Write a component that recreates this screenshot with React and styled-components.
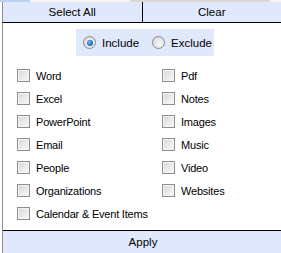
import styled, { createGlobalStyle } from "styled-components"

const Global = createGlobalStyle`
    html, body { margin: 0; padding: 0; background: #fff; }
    body { font-family: "Liberation Sans", Arial, sans-serif; font-size: 11px; color: #000; }
`;

const Panel = styled.div`
    width: 281px;
    height: 253px;
    display: flex;
    flex-direction: column;
    background: #fff;
    overflow: hidden;
`;

const TopStrip = styled.div`
    height: 2px;
    display: flex;
`;

const StripPiece = styled.div`
    width: ${p => p.w}px;
    background: ${p => p.c};
`;

const ButtonBar = styled.div`
    display: flex;
    height: 20px;
    border-bottom: 1px solid #000;
    background: #e0e9fb;
    margin-left: 2px;
    border-left: 1px solid #8f8f8f;
`;

const BarButton = styled.div`
    flex: 1;
    display: flex;
    align-items: center;
    justify-content: center;
    font-size: 11.5px;
    & + & { border-left: 1px solid #000; }
`;

const Body = styled.div`
    flex: 1;
    margin-left: 2px;
    border-left: 1px solid #8f8f8f;
    display: flex;
    flex-direction: column;
`;

const RadioBox = styled.div`
    align-self: flex-start;
    margin: 6px 0 0 73px;
    width: 138px;
    height: 27px;
    background: #e0e9fb;
    display: flex;
    align-items: center;
    padding-left: 7px;
    box-sizing: border-box;
`;

const RadioItem = styled.label`
    display: flex;
    align-items: center;
    margin-right: ${p => p.mr || 0}px;
    font-size: 11.5px;
`;

const RadioDot = styled.span`
    width: 13px;
    height: 13px;
    border-radius: 50%;
    box-sizing: border-box;
    border: 1px solid #8a8a8a;
    background: radial-gradient(circle at 60% 60%, #f8f8f8 0%, #e4e4e4 55%, #c8c8c8 100%);
    display: flex;
    align-items: center;
    justify-content: center;
    margin-right: 6px;
    &::after {
        content: "";
        display: ${p => (p.on ? "block" : "none")};
        width: 6px;
        height: 6px;
        border-radius: 50%;
        background: radial-gradient(circle at 40% 40%, #6cc2f2 0%, #1d6aad 65%, #0f3c68 100%);
    }
`;

const Grid = styled.div`
    display: grid;
    grid-template-columns: 145px 1fr;
    padding: 13px 0 0 14px;
    row-gap: 10px;
`;

const CheckItem = styled.label`
    display: flex;
    align-items: center;
    height: 13px;
    white-space: nowrap;
    letter-spacing: -0.2px;
    grid-column: ${p => p.col || "auto"};
`;

const Box = styled.span`
    width: 13px;
    height: 13px;
    box-sizing: border-box;
    border: 1px solid #8e8f8f;
    background: linear-gradient(135deg, #d6d6d6 0%, #ececec 60%, #fafafa 100%);
    box-shadow: inset 0 0 0 1px #f4f4f4;
    margin-right: 6px;
    flex-shrink: 0;
`;

const Spacer = styled.div`
    flex: 1;
`;

const ApplyBar = styled.div`
    height: 22px;
    border-top: 1px solid #000;
    background: #e0e9fb;
    display: flex;
    align-items: center;
    justify-content: center;
    padding-left: 2px;
    font-size: 11.5px;
`;

const left = ["Word", "Excel", "PowerPoint", "Email", "People", "Organizations"];
const right = ["Pdf", "Notes", "Images", "Music", "Video", "Websites"];

export default function App() {
    return (
        <Panel>
            <Global />
            <TopStrip>
                <StripPiece w={30} c="#bcd2ee" />
                <StripPiece w={100} c="#f4f4f4" />
                <StripPiece w={140} c="#d8d8d8" />
                <StripPiece w={11} c="#f4f4f4" />
            </TopStrip>
            <ButtonBar>
                <BarButton>Select All</BarButton>
                <BarButton>Clear</BarButton>
            </ButtonBar>
            <Body>
                <RadioBox>
                    <RadioItem mr={13}><RadioDot on />Include</RadioItem>
                    <RadioItem><RadioDot />Exclude</RadioItem>
                </RadioBox>
                <Grid>
                    {left.flatMap((l, i) => [
                        <CheckItem key={l}><Box />{l}</CheckItem>,
                        <CheckItem key={right[i]}><Box />{right[i]}</CheckItem>,
                    ])}
                    <CheckItem col="1 / 3"><Box />Calendar &amp; Event Items</CheckItem>
                </Grid>
                <Spacer />
                <ApplyBar>Apply</ApplyBar>
            </Body>
        </Panel>
    )
}
